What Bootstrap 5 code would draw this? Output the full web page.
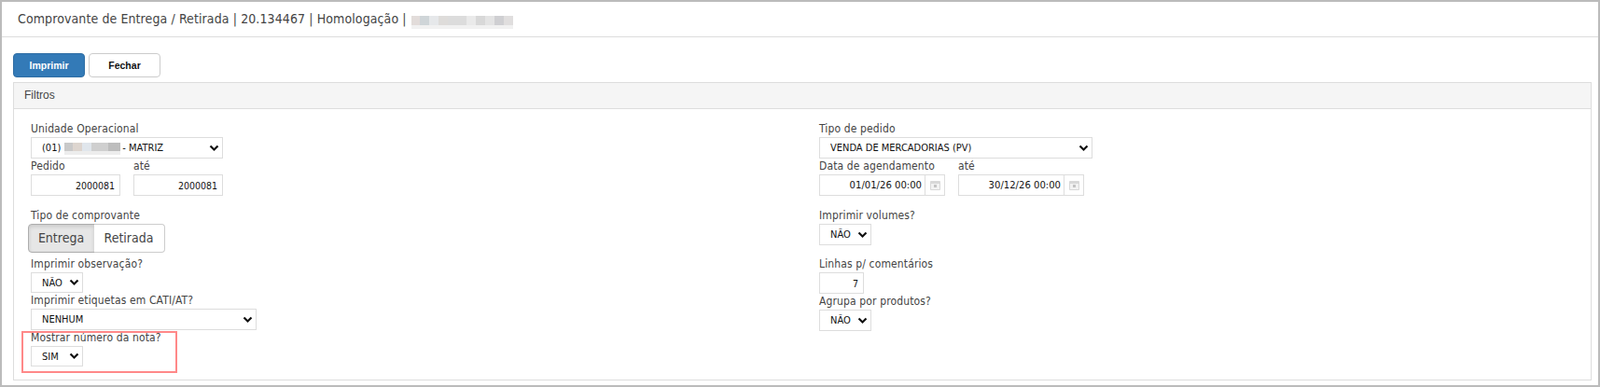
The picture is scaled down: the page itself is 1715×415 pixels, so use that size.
<!DOCTYPE html>
<html lang="pt-BR">
<head>
<meta charset="utf-8">
<title>Comprovante</title>
<link href="https://cdn.jsdelivr.net/npm/bootstrap@5.3.0/dist/css/bootstrap.min.css" rel="stylesheet">
<style>
html,body{height:100%;background:#fff;margin:0}
body{font-family:"DejaVu Sans Condensed","DejaVu Sans",sans-serif;font-size:12px;color:#444}
.frame{width:1715px;height:415px;border:solid #bbb;border-width:2px;overflow:hidden;position:relative}
.topbar{height:38px;border-bottom:1px solid #ddd;padding:0 0 0 17px;font-size:14px;line-height:37px;color:#444;letter-spacing:.1px;white-space:nowrap}
.blur-title{margin-left:5px;vertical-align:-6px}
.actions{padding:17px 0 0 12px;height:48px}
.act{width:77px;height:26px;padding:0;font:bold 10.5px/24px "Liberation Sans",sans-serif;border-radius:4px}
.act-p{background:#337ab7;border:1px solid #2e6da4;color:#fff}
.act-d{background:#fff;border:1px solid #ccc;color:#111}
.filtro{margin-left:12px;width:1692px;height:320px;border:1px solid #ddd;background:#fff}
.filtro-h{height:28px;padding:0 11px;background:#f5f5f5;border-bottom:1px solid #ddd;font:12px/26px "Liberation Sans",sans-serif;color:#444}
.filtro-b{padding:13px 0 0 18px}
.cl{width:810px}
.cl-l{width:845px}
.lb{display:block;height:17px;line-height:17px;margin:0;color:#444;font-size:12px;letter-spacing:.13px;white-space:nowrap}
.sel{display:block;height:23px;padding:0 16px 0 11px;font:11px/21px "DejaVu Sans Condensed","DejaVu Sans",sans-serif;color:#111;border:1px solid #ddd;border-radius:0;background-color:#fff;background-repeat:no-repeat;background-position:right 3px center;background-size:11px 8px;background-image:url("data:image/svg+xml,%3Csvg xmlns='http://www.w3.org/2000/svg' viewBox='0 0 11 8'%3E%3Cpath d='M1.5 1.5 5.5 5.5 9.5 1.5' fill='none' stroke='%23111' stroke-width='2.2'/%3E%3C/svg%3E");box-shadow:none}
.sel-h{height:22px}
.w204{width:206px}.w293{width:293px}.w242{width:242px}.w56{width:56px}
.num{display:block;height:23px;padding:0 5px 0 0;text-align:right;font:10.5px/21px "DejaVu Sans Condensed","DejaVu Sans",sans-serif;color:#111;border:1px solid #ddd;border-radius:0;background:#fff}
.w96{width:96px}.w48{width:48px}
.pair{gap:14px}
.dt{width:114px;font-size:11.2px;padding-right:3px}
.addon{width:21px;height:23px;border:1px solid #ddd;border-left:0;background:#fff;display:flex;align-items:center;justify-content:center}
.mt13{margin-top:13px}
.mt12{margin-top:12px}
.mt3{margin-top:4px}
.grp{margin-left:-3.5px}
.tg{height:31px;padding:0;font:14px/29px "DejaVu Sans Condensed","DejaVu Sans",sans-serif;color:#444;border:1px solid #ccc;background:#fff}
.tg-a{width:72px;background:#e6e6e6;border-color:#adadad;box-shadow:inset 0 2px 4px rgba(0,0,0,.13);border-radius:4px 0 0 4px}
.tg-b{width:76px;margin-left:-1px;border-left:0;border-radius:0 4px 4px 0}
.hl-wrap{position:relative}
.hl{position:absolute;left:-10px;top:1px;width:167px;height:45px;border:2px solid #f88;pointer-events:none}
.over{position:relative;display:block}
.over svg{position:absolute;left:36px;top:6px}
</style>
</head>
<body>
<div class="frame">
  <div class="topbar">Comprovante de Entrega / Retirada | 20.134467 | Homologação |<svg class="blur-title" width="109" height="14" aria-hidden="true"><rect width="109" height="14" fill="#f1f1f1"/><rect width="9" height="10" fill="#e2dcda"/><rect x="9" width="10" height="10" fill="#cfd5d8"/><rect x="19" width="10" height="10" fill="#e6e8ea"/><rect x="29" width="10" height="10" fill="#dedcda"/><rect x="39" width="20" height="10" fill="#dcdcdc"/><rect x="59" width="10" height="10" fill="#eaeaea"/><rect x="69" width="10" height="10" fill="#d8d8d8"/><rect x="79" width="10" height="10" fill="#e4e4e4"/><rect x="89" width="10" height="10" fill="#cfcfd2"/><rect x="99" width="10" height="10" fill="#e0dede"/></svg></div>
  <div class="actions d-flex gap-1">
    <button type="button" class="btn act act-p">Imprimir</button>
    <button type="button" class="btn act act-d">Fechar</button>
  </div>
  <div class="filtro">
    <div class="filtro-h">Filtros</div>
    <div class="filtro-b d-flex">
      <div class="cl-l">
        <label class="lb">Unidade Operacional</label>
        <span class="over w204">
          <select class="form-select sel w204"><option>(01) &nbsp;&nbsp;&nbsp;&nbsp;&nbsp;&nbsp;&nbsp;&nbsp;&nbsp;&nbsp;&nbsp;&nbsp;&nbsp;&nbsp;&nbsp;&nbsp;&nbsp;&nbsp;&nbsp; - MATRIZ</option></select>
          <svg width="60" height="13" aria-hidden="true"><rect width="60" height="13" fill="#ededed"/><rect width="9" height="9" fill="#c9c9c9"/><rect x="9" width="10" height="9" fill="#ddd5cf"/><rect x="19" width="10" height="9" fill="#e0e6ec"/><rect x="29" width="18" height="9" fill="#cfcfcf"/><rect x="47" width="13" height="9" fill="#bdbdbd"/></svg>
        </span>
        <div class="d-flex pair">
          <div><label class="lb">Pedido</label><input class="form-control num w96" value="2000081"></div>
          <div><label class="lb">até</label><input class="form-control num w96" value="2000081"></div>
        </div>
        <label class="lb mt13">Tipo de comprovante</label>
        <div class="btn-group grp">
          <button type="button" class="btn tg tg-a">Entrega</button>
          <button type="button" class="btn tg tg-b">Retirada</button>
        </div>
        <label class="lb mt3">Imprimir observação?</label>
        <select class="form-select sel sel-h w56"><option>NÃO</option></select>
        <label class="lb">Imprimir etiquetas em CATI/AT?</label>
        <select class="form-select sel w242"><option>NENHUM</option></select>
        <div class="hl-wrap">
          <span class="hl"></span>
          <label class="lb">Mostrar número da nota?</label>
          <select class="form-select sel sel-h w56"><option>SIM</option></select>
        </div>
      </div>
      <div class="cl">
        <label class="lb">Tipo de pedido</label>
        <select class="form-select sel w293"><option>VENDA DE MERCADORIAS (PV)</option></select>
        <div class="d-flex pair">
          <div>
            <label class="lb">Data de agendamento</label>
            <div class="d-flex"><input class="form-control num dt" value="01/01/26 00:00"><span class="addon"><svg width="11" height="11" viewBox="0 0 11 11" aria-hidden="true"><path d="M.5 1.5h10v9H.5z" fill="#f2f2f2" stroke="#d8d8d8"/><rect x="1" y="2" width="9" height="2" fill="#d8d8d8"/><rect x="4" y="5" width="3" height="3" fill="#c4c4c4"/></svg></span></div>
          </div>
          <div>
            <label class="lb">até</label>
            <div class="d-flex"><input class="form-control num dt" value="30/12/26 00:00"><span class="addon"><svg width="11" height="11" viewBox="0 0 11 11" aria-hidden="true"><path d="M.5 1.5h10v9H.5z" fill="#f2f2f2" stroke="#d8d8d8"/><rect x="1" y="2" width="9" height="2" fill="#d8d8d8"/><rect x="4" y="5" width="3" height="3" fill="#c4c4c4"/></svg></span></div>
          </div>
        </div>
        <label class="lb mt13">Imprimir volumes?</label>
        <select class="form-select sel w56"><option>NÃO</option></select>
        <label class="lb mt12">Linhas p/ comentários</label>
        <input class="form-control num w48 sel-h" value="7">
        <label class="lb">Agrupa por produtos?</label>
        <select class="form-select sel w56"><option>NÃO</option></select>
      </div>
    </div>
  </div>
</div>
<script src="https://cdn.jsdelivr.net/npm/bootstrap@5.3.0/dist/js/bootstrap.bundle.min.js"></script>
</body>
</html>
